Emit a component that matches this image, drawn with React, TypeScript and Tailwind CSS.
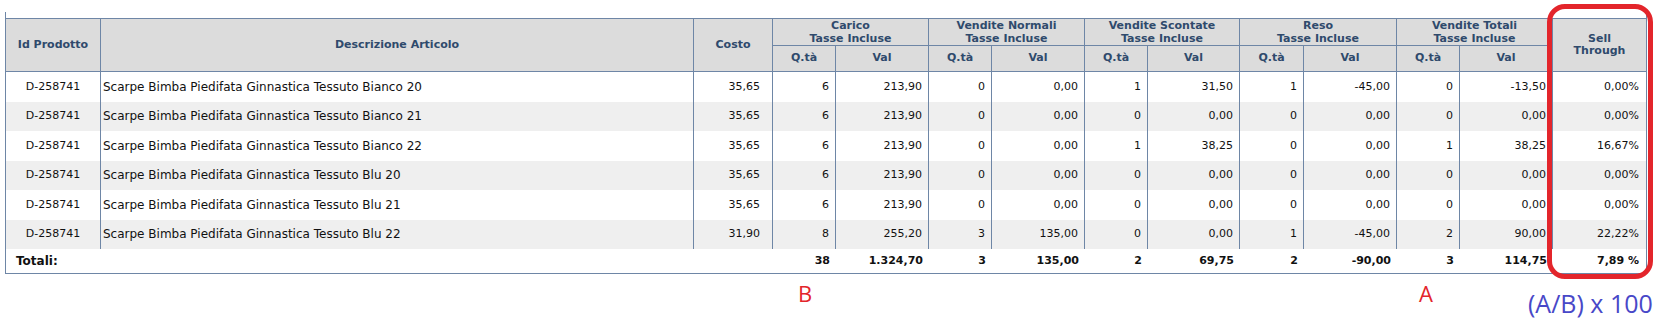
import React from "react";

type Row = {
  id: string;
  desc: string;
  costo: string;
  v: string[]; // 10 values
  sell: string;
};

const rows: Row[] = [
  { id: "D-258741", desc: "Scarpe Bimba Piedifata Ginnastica Tessuto Bianco 20", costo: "35,65", v: ["6", "213,90", "0", "0,00", "1", "31,50", "1", "-45,00", "0", "-13,50"], sell: "0,00%" },
  { id: "D-258741", desc: "Scarpe Bimba Piedifata Ginnastica Tessuto Bianco 21", costo: "35,65", v: ["6", "213,90", "0", "0,00", "0", "0,00", "0", "0,00", "0", "0,00"], sell: "0,00%" },
  { id: "D-258741", desc: "Scarpe Bimba Piedifata Ginnastica Tessuto Bianco 22", costo: "35,65", v: ["6", "213,90", "0", "0,00", "1", "38,25", "0", "0,00", "1", "38,25"], sell: "16,67%" },
  { id: "D-258741", desc: "Scarpe Bimba Piedifata Ginnastica Tessuto Blu 20", costo: "35,65", v: ["6", "213,90", "0", "0,00", "0", "0,00", "0", "0,00", "0", "0,00"], sell: "0,00%" },
  { id: "D-258741", desc: "Scarpe Bimba Piedifata Ginnastica Tessuto Blu 21", costo: "35,65", v: ["6", "213,90", "0", "0,00", "0", "0,00", "0", "0,00", "0", "0,00"], sell: "0,00%" },
  { id: "D-258741", desc: "Scarpe Bimba Piedifata Ginnastica Tessuto Blu 22", costo: "31,90", v: ["8", "255,20", "3", "135,00", "0", "0,00", "1", "-45,00", "2", "90,00"], sell: "22,22%" },
];

const totals = ["38", "1.324,70", "3", "135,00", "2", "69,75", "2", "-90,00", "3", "114,75"];

const groups = ["Vendite Normali", "Vendite Scontate", "Reso", "Vendite Totali"];

const GRID =
  "grid grid-cols-[95px_593px_79px_63px_93px_63px_93px_63px_92px_64px_93px_63px_93px_93px]";

const hc = "bg-[#dcdcdc] text-[#2f4a6c] font-bold border-[#6e86a6] flex items-center justify-center text-center";

export default function App() {
  return (
    <div
      className="relative w-[1655px] h-[327px] bg-white overflow-hidden"
      style={{ fontFamily: '"DejaVu Sans", "Liberation Sans", sans-serif' }}
    >
      <div className="pt-[12px] pl-[5px]">
        <div className="w-[1642px] border-x border-b border-[#6e86a6] pt-[6px]">
          {/* Header */}
          <div className={`${GRID} grid-rows-[27px_26px] border-t border-[#6e86a6] text-[11px]`}>
            <div className={`${hc} row-span-2 border-r border-b`}>Id Prodotto</div>
            <div className={`${hc} row-span-2 border-r border-b`}>Descrizione Articolo</div>
            <div className={`${hc} row-span-2 border-r border-b`}>Costo</div>
            <div className={`${hc} col-span-2 border-r border-b leading-[13px] flex-col`}>
              <span>Carico</span>
              <span>Tasse Incluse</span>
            </div>
            {groups.map((g) => (
              <div key={g} className={`${hc} col-span-2 border-r border-b leading-[13px] flex-col`}>
                <span>{g}</span>
                <span>Tasse Incluse</span>
              </div>
            ))}
            <div className={`${hc} row-span-2 border-b leading-[12px] flex-col`}>
              <span>Sell</span>
              <span>Through</span>
            </div>
            {[0, 1, 2, 3, 4].map((i) => (
              <React.Fragment key={i}>
                <div className={`${hc} border-r border-b`}>Q.tà</div>
                <div className={`${hc} border-r border-b`}>Val</div>
              </React.Fragment>
            ))}
          </div>

          {/* Body */}
          {rows.map((r, i) => (
            <div
              key={i}
              className={`${GRID} h-[29.5px] text-[11px] text-[#111] ${i % 2 === 1 ? "bg-[#efefef]" : "bg-white"}`}
            >
              <div className="border-r border-[#6e86a6] flex items-center justify-center">{r.id}</div>
              <div className="border-r border-[#6e86a6] flex items-center pl-[2px] whitespace-nowrap text-[12px]">{r.desc}</div>
              <div className="border-r border-[#6e86a6] flex items-center justify-end pr-[12px]">{r.costo}</div>
              {r.v.map((val, j) => (
                <div key={j} className="border-r border-[#6e86a6] flex items-center justify-end pr-[6px]">
                  {val}
                </div>
              ))}
              <div className="flex items-center justify-end pr-[7px]">{r.sell}</div>
            </div>
          ))}

          {/* Totals */}
          <div className={`${GRID} h-[24px] text-[11px] font-bold text-[#111]`}>
            <div className="col-span-3 flex items-center pl-[10px] text-[12px]">Totali:</div>
            {totals.map((t, j) => (
              <div key={j} className="flex items-center justify-end pr-[6px]">
                {t}
              </div>
            ))}
            <div className="flex items-center justify-end pr-[7px]">7,89 %</div>
          </div>
        </div>
      </div>

      {/* Annotations */}
      <div className="absolute left-[1547px] top-[4px] w-[106px] h-[275px] border-[5px] border-[#e3252b] rounded-[18px]" />
      <div
        className="absolute left-[798px] top-[282px] text-[22px] leading-none text-[#e3252b]"
        style={{ fontFamily: '"Open Sans", sans-serif' }}
      >
        B
      </div>
      <div
        className="absolute left-[1419px] top-[282px] text-[22px] leading-none text-[#e3252b]"
        style={{ fontFamily: '"Open Sans", sans-serif' }}
      >
        A
      </div>
      <div
        className="absolute left-[1528px] top-[291px] text-[25px] leading-none text-[#4848c8] whitespace-nowrap"
        style={{ fontFamily: '"Open Sans", sans-serif' }}
      >
        (A/B) x 100
      </div>
    </div>
  );
}
